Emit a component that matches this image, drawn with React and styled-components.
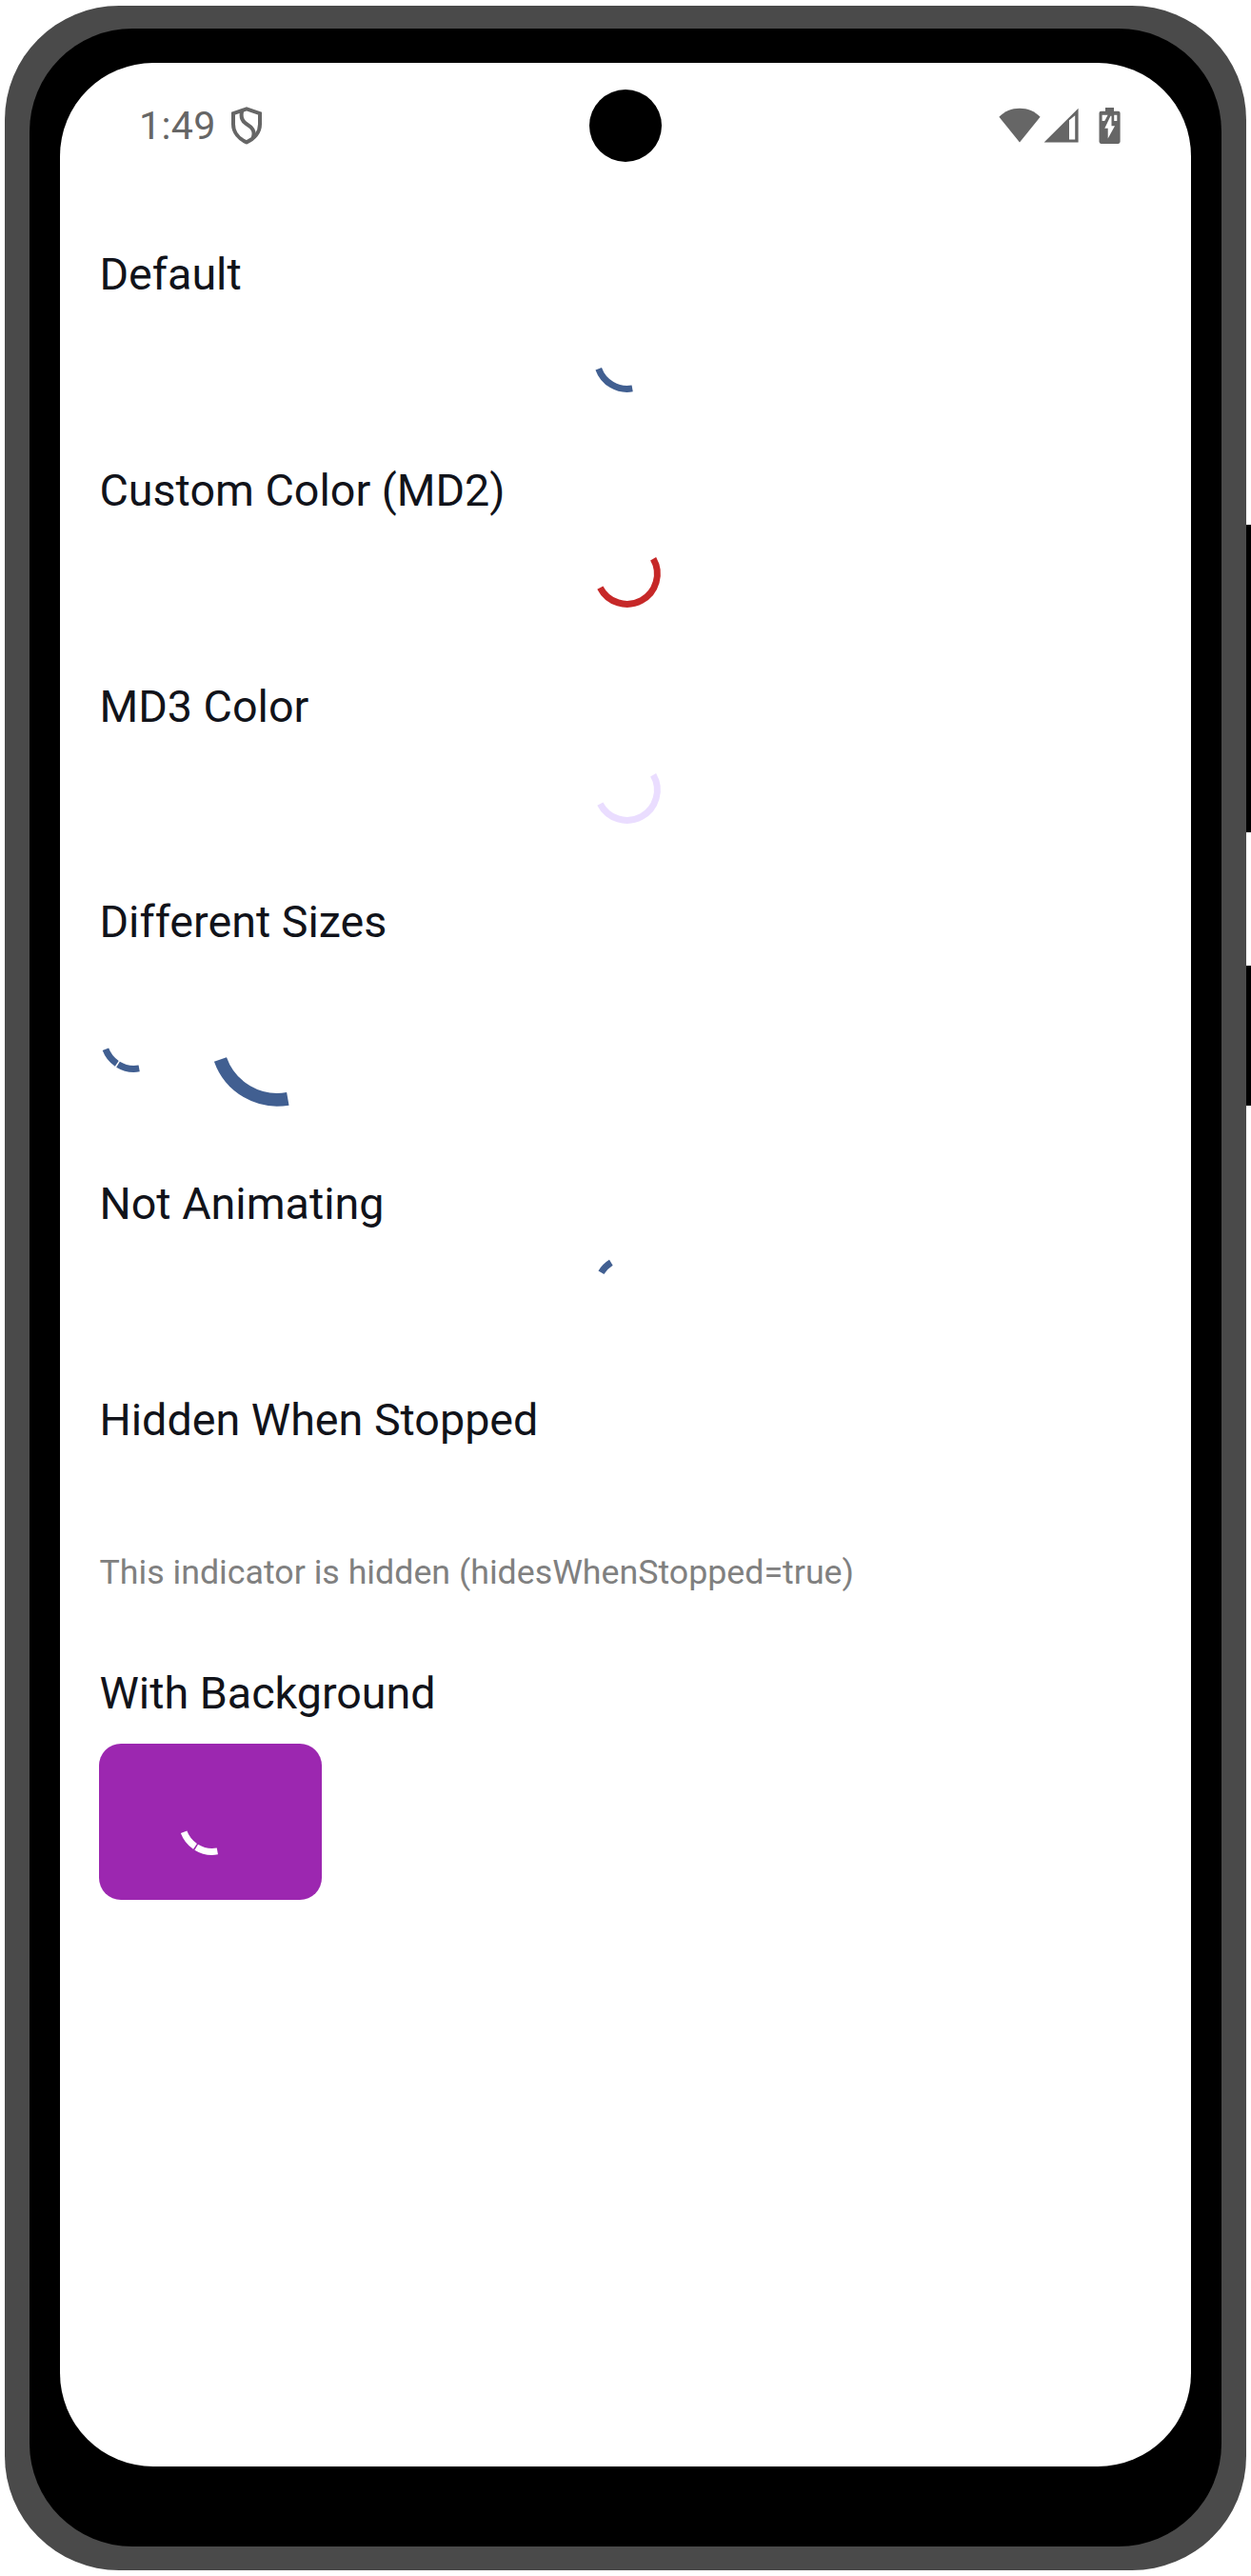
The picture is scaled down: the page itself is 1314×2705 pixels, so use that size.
import React from "react";
import styled, { createGlobalStyle } from "styled-components";

const GlobalStyle = createGlobalStyle`
  * { box-sizing: border-box; }
  html, body { margin: 0; background: #fff; }
  body { width: 1314px; height: 2705px; overflow: hidden; }
`;

const Stage = styled.main`
  display: flex;
  width: 1314px;
  height: 2705px;
  padding: 5.6px 0 6.4px 4.6px;
  font-family: Roboto, "Noto Sans", sans-serif;
`;

const Frame = styled.div`
  display: flex;
  flex: none;
  width: 1304.6px;
  height: 2693px;
  padding: 24.4px 26.1px 24.6px;
  border-radius: 120px;
  background: #4a4a4a;
`;

const Bezel = styled.div`
  display: flex;
  flex: 1;
  padding: 36.3px 32.6px 84.5px;
  border-radius: 108px;
  background: #000;
`;

const Screen = styled.div`
  display: flex;
  flex: 1;
  flex-direction: column;
  min-width: 0;
  border-radius: 98px;
  background: #fff;
`;

const SideKeys = styled.div`
  display: flex;
  flex: 1;
  flex-direction: column;
  gap: 140.4px;
  padding-top: 545.4px;
`;

const Key = styled.div`
  height: ${(p) => p.$length}px;
  background: #000;
`;

const StatusBar = styled.header`
  display: grid;
  grid-template-columns: 1fr auto 1fr;
  align-items: center;
  height: 131px;
  padding: 0 74px;
  color: #666;
`;

const StatusLeft = styled.div`
  display: flex;
  align-items: center;
  gap: 14.6px;
  padding-left: 8.6px;
`;

const StatusRight = styled.div`
  display: flex;
  align-items: center;
  justify-content: flex-end;
`;

const Clock = styled.time`
  font-size: 41.2px;
  line-height: 48px;
  letter-spacing: 0.4px;
`;

const Camera = styled.div`
  width: 76px;
  height: 76px;
  border-radius: 50%;
  background: #000;
`;

const IconGroup = styled.div`
  display: flex;
  align-items: center;
  gap: 3px;
  margin-right: 21px;
`;

const Content = styled.div`
  display: flex;
  flex-direction: column;
  gap: 70px;
  padding: 57px 41.2px 0;
`;

const Section = styled.section`
  display: flex;
  flex-direction: column;
  gap: 18.1px;
`;

const Heading = styled.h2`
  margin: 0;
  font-size: 46.65px;
  font-weight: 400;
  line-height: 69.3px;
  color: #11131a;
  white-space: nowrap;
`;

const Row = styled.div`
  display: flex;
  align-items: center;
  justify-content: ${(p) => (p.$center ? "center" : "flex-start")};
  gap: 46.2px;
`;

const HiddenBlock = styled.div`
  display: flex;
  flex-direction: column;
  justify-content: flex-end;
  height: 129.2px;
  padding-bottom: 2.6px;
`;

const Note = styled.p`
  margin: 0;
  font-size: 35.75px;
  line-height: 40px;
  color: #808080;
  white-space: nowrap;
`;

const Tile = styled.div`
  display: flex;
  align-items: center;
  justify-content: center;
  width: 233.6px;
  height: 164px;
  border-radius: 23px;
  background: #9c27b0;
`;

const Spinner = styled.svg`
  flex: none;
  width: ${(p) => p.$size}px;
  height: ${(p) => p.$size}px;
  overflow: visible;
  fill: none;
  stroke: ${(p) => p.$color};
`;

const BLUE = "#415f91";

const arc = (cx, cy, r, from, to) => {
  const pt = (deg) => {
    const a = (deg * Math.PI) / 180;
    return `${(cx + r * Math.cos(a)).toFixed(2)} ${(cy + r * Math.sin(a)).toFixed(2)}`;
  };
  return `M${pt(from)}A${r} ${r} 0 ${to - from > 180 ? 1 : 0} 1 ${pt(to)}`;
};

function ActivityIndicator({ size = 69.3, color = BLUE, arcs, shift = 2 }) {
  const stroke = size * 0.1;
  const r = size * 0.508 - stroke / 2;
  return (
    <Spinner $size={size} $color={color} viewBox={`0 0 ${size} ${size}`}>
      {arcs.map(([from, to]) => (
        <path key={from} d={arc(size / 2 + shift, size / 2, r, from, to)} strokeWidth={stroke} />
      ))}
    </Spinner>
  );
}

const ShieldIcon = () => (
  <svg width="34" height="40" viewBox="0 0 34 40" fill="none" stroke="currentColor" strokeWidth="4">
    <path d="M17 2.4 31 7.2V18.5C31 27 25 33.8 17 37.4 9 33.8 3 27 3 18.5V7.2Z" />
    <path d="M12.2 4.5C10.5 11 12.5 15.5 17 18.3 22.5 21.7 26.5 25 23.6 33.2" />
  </svg>
);

const WifiIcon = () => (
  <svg width="44" height="37" viewBox="0 0 44 37" fill="currentColor">
    <path d="M22 36.5 .4 9.8C6 4 13.5 .8 22 .8S38 4 43.6 9.8Z" />
  </svg>
);

const SignalIcon = () => (
  <svg width="37" height="37" viewBox="0 0 37 37" fill="currentColor" fillRule="evenodd">
    <path d="M.6 36.6 36.6 .8V36.6ZM27 13.2V33.4H33.2V8.2Z" />
  </svg>
);

const BatteryIcon = () => (
  <svg width="23" height="38" viewBox="0 0 23 38" fill="currentColor" fillRule="evenodd">
    <path d="M7 0H16V3.7H20.5Q22.6 3.7 22.6 5.8V35.8Q22.6 37.9 20.5 37.9H2.6Q.5 37.9 .5 35.8V5.8Q.5 3.7 2.6 3.7H7ZM3.6 7.7V13.9H6.3L9.6 7.7ZM12.5 8.7 6.3 21.7H9.7V32.6L17 19.2H13.5V8.7ZM16.2 7.7V13.9H19.3V7.7Z" />
  </svg>
);

const SHORT = [[80, 160.5]];
const LONG = [[-30, 153]];
const SPLIT = [[80, 121.6], [124.3, 159.5]];
const STOPPED = [[211, 238]];

export default function App() {
  return (
    <>
      <GlobalStyle />
      <Stage>
        <Frame>
          <Bezel>
            <Screen>
              <StatusBar>
                <StatusLeft>
                  <Clock>1:49</Clock>
                  <ShieldIcon />
                </StatusLeft>
                <Camera />
                <StatusRight>
                  <IconGroup>
                    <WifiIcon />
                    <SignalIcon />
                  </IconGroup>
                  <BatteryIcon />
                </StatusRight>
              </StatusBar>
              <Content>
                <Section>
                  <Heading>Default</Heading>
                  <Row $center>
                    <ActivityIndicator arcs={SHORT} />
                  </Row>
                </Section>
                <Section>
                  <Heading>Custom Color (MD2)</Heading>
                  <Row $center>
                    <ActivityIndicator color="#c62828" arcs={LONG} />
                  </Row>
                </Section>
                <Section>
                  <Heading>MD3 Color</Heading>
                  <Row $center>
                    <ActivityIndicator color="#eaddff" arcs={LONG} />
                  </Row>
                </Section>
                <Section>
                  <Heading>Different Sizes</Heading>
                  <Row>
                    <ActivityIndicator arcs={SPLIT} />
                    <ActivityIndicator size={138.6} arcs={SHORT} />
                  </Row>
                </Section>
                <Section>
                  <Heading>Not Animating</Heading>
                  <Row $center>
                    <ActivityIndicator arcs={STOPPED} />
                  </Row>
                </Section>
                <Section>
                  <Heading>Hidden When Stopped</Heading>
                  <HiddenBlock>
                    <Note>This indicator is hidden (hidesWhenStopped=true)</Note>
                  </HiddenBlock>
                </Section>
                <Section>
                  <Heading>With Background</Heading>
                  <Tile>
                    <ActivityIndicator color="#fff" arcs={SPLIT} shift={1.2} />
                  </Tile>
                </Section>
              </Content>
            </Screen>
          </Bezel>
        </Frame>
        <SideKeys>
          <Key $length={323} />
          <Key $length={146.5} />
        </SideKeys>
      </Stage>
    </>
  );
}
